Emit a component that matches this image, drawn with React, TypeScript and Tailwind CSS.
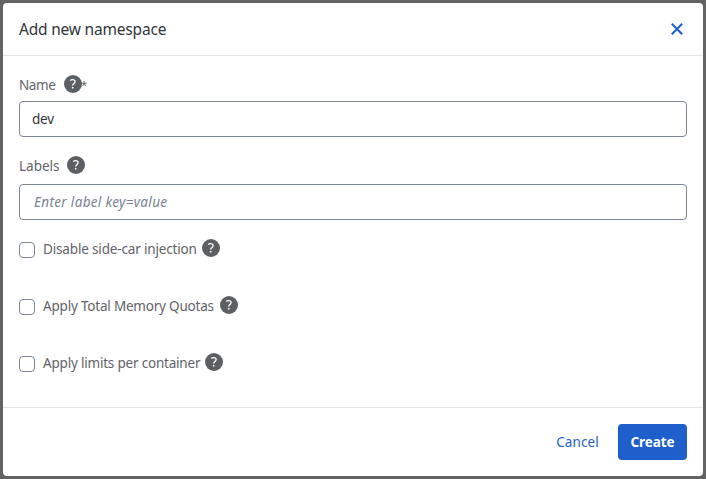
type HelpProps = { className?: string };

function Help({ className = "" }: HelpProps) {
  return (
    <svg className={`size-[18px] shrink-0 ${className}`} viewBox="0 0 18 18" fill="none" aria-hidden="true">
      <circle cx="9" cy="9" r="9" fill="#5d6063" />
      <path d="M6.2 5.4C6.8 4.9 7.6 4.6 8.5 4.6c1.5 0 2.6.7 2.6 2 0 1-.6 1.5-1.3 2.1-.7.6-1.1.9-1.1 1.9" stroke="#fff" strokeWidth="1.3" />
      <circle cx="8.7" cy="12.7" r=".9" fill="#fff" />
    </svg>
  );
}

const options = [
  { label: "Disable side-car injection", width: "w-[154px]", spacing: "tracking-[-0.16px]", gap: "ml-[5px]" },
  { label: "Apply Total Memory Quotas", width: "w-[171px]", spacing: "tracking-[-0.2px]", gap: "ml-[6px]" },
  { label: "Apply limits per container", width: "w-[157px]", spacing: "tracking-[-0.2px]", gap: "ml-[5px]" },
];

export default function App() {
  return (
    <div className="h-[479px] w-[706px] bg-[#636363] p-[3px] font-['Noto_Sans',sans-serif] text-[13.5px] text-[#5f6368]">
      <section role="dialog" className="flex h-[473px] w-[700px] flex-col rounded-[4px] bg-white">
        <header className="flex h-[53px] shrink-0 items-center justify-between border-b border-[#e5e5e5] pr-5 pl-4">
          <h1 className="text-[15.5px] leading-6 tracking-[-0.2px] whitespace-nowrap text-[#32363a]">Add new namespace</h1>
          <button aria-label="Close" className="size-3">
            <svg viewBox="0 0 12 12" className="size-3" stroke="#1f5fcb" strokeWidth="2">
              <path d="M.8.8 11.2 11.2M11.2.8.8 11.2" />
            </svg>
          </button>
        </header>
        <main className="flex h-[351px] shrink-0 flex-col px-4 pt-[19px]">
          <div className="flex h-[18px] items-center whitespace-nowrap">
            <span className="relative top-px w-9 tracking-[-0.4px]">Name</span>
            <Help className="ml-[9px]" />
            <span className="relative top-px -left-px text-[11px]">*</span>
          </div>
          <input
            defaultValue="dev"
            className="mt-[8px] h-9 w-full shrink-0 rounded-[4px] border border-[#7f8794] px-3 tracking-[-0.2px] text-[#32363a] outline-none"
          />
          <div className="mt-[19px] flex h-[18px] items-center whitespace-nowrap">
            <span className="relative top-px w-10">Labels</span>
            <Help className="ml-2" />
          </div>
          <input
            placeholder="Enter label key=value"
            className="mt-[10px] h-9 w-full shrink-0 rounded-[4px] border border-[#7f8794] px-[14px] tracking-[0.33px] outline-none placeholder:text-[#7b8392] placeholder:italic"
          />
          <div className="mt-[19px] flex flex-col gap-[39px]">
            {options.map((o) => (
              <label key={o.label} className="flex h-[18px] items-center whitespace-nowrap">
                <input type="checkbox" className="relative top-[2px] size-4 shrink-0 appearance-none rounded-[4px] border border-[#7f8794]" />
                <span className={`relative top-px ml-2 ${o.width} ${o.spacing}`}>{o.label}</span>
                <Help className={o.gap} />
              </label>
            ))}
          </div>
        </main>
        <footer className="flex h-[69px] items-center justify-end border-t border-[#e5e5e5] pr-4">
          <button className="mr-[19px] w-[43px] tracking-[0.1px] whitespace-nowrap text-[#1f5fcb]">Cancel</button>
          <button className="h-9 w-[69px] rounded-[4px] bg-[#1f5fcb] font-bold tracking-[-0.1px] text-white">Create</button>
        </footer>
      </section>
    </div>
  );
}
